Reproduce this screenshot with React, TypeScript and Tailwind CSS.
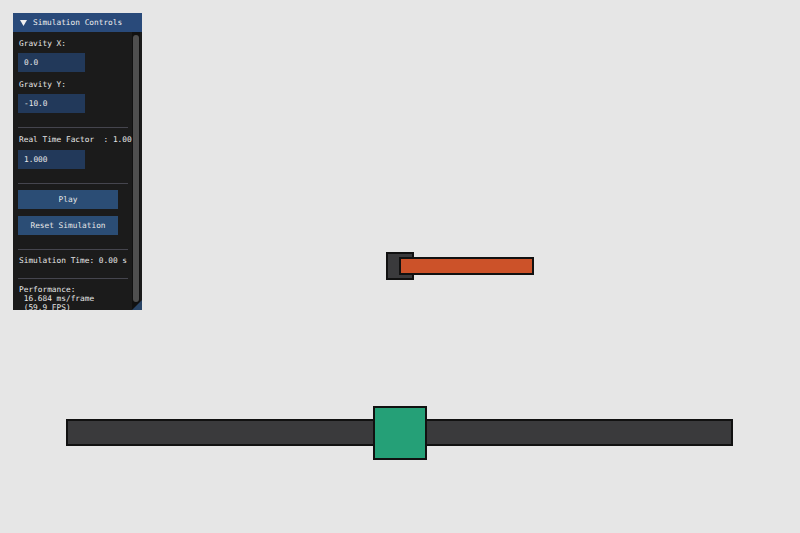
import React from "react";

const mono = { fontFamily: '"DejaVu Sans Mono", "Liberation Mono", monospace' };

function Label({ children, mt }: { children: React.ReactNode; mt: string }) {
  return (
    <div className={`${mt} h-[10px] leading-[10px] pt-px pl-[6px] whitespace-pre text-[7.8px] text-[#e8e8e8]`}>
      {children}
    </div>
  );
}

function Input({ value, mt }: { value: string; mt: string }) {
  return (
    <div className={`${mt} ml-[5px] w-[67px] h-[19px] bg-[#22395a] flex items-center pl-[6px] pt-px text-[7.8px] text-[#e8e8e8]`}>
      {value}
    </div>
  );
}

function Sep({ mt }: { mt: string }) {
  return <div className={`${mt} ml-[5px] w-[110px] h-px bg-[#45454e]`} />;
}

function Btn({ label, mt }: { label: string; mt: string }) {
  return (
    <div className={`${mt} ml-[5px] w-[100px] h-[19px] bg-[#2b4d75] flex items-center justify-center pt-px text-[7.8px] text-[#e8e8e8]`}>
      {label}
    </div>
  );
}

export default function App() {
  return (
    <div className="relative w-[800px] h-[533px] bg-[#e6e6e6] overflow-hidden" style={mono}>
      {/* Scene */}
      <div className="absolute left-[66px] top-[419px] w-[667px] h-[27px] bg-[#3a3a3c] border-2 border-[#111]" />
      <div className="absolute left-[373px] top-[406px] w-[54px] h-[54px] bg-[#25a077] border-2 border-[#111]" />
      <div className="absolute left-[386px] top-[252px] w-[28px] h-[28px] bg-[#3a3a3c] border-2 border-[#111]" />
      <div className="absolute left-[399px] top-[257px] w-[135px] h-[18px] bg-[#cc5229] border-2 border-[#111]" />

      {/* ImGui window */}
      <div className="absolute left-[13px] top-[13px] w-[129px] h-[297px] bg-[#1b1b1b] overflow-hidden flex flex-col">
        <div className="h-[19px] shrink-0 bg-[#294a7a] flex items-center pt-px text-[7.8px] text-[#f0f0f0]">
          <svg width="7" height="6" viewBox="0 0 7 6" className="ml-[7px] mr-[6px]">
            <polygon points="0,0 7,0 3.5,6" fill="#f0f0f0" />
          </svg>
          <span>Simulation Controls</span>
        </div>
        <div className="flex flex-col">
          <Label mt="mt-[6px]">Gravity X:</Label>
          <Input mt="mt-[5px]" value="0.0" />
          <Label mt="mt-[7px]">Gravity Y:</Label>
          <Input mt="mt-[5px]" value="-10.0" />
          <Sep mt="mt-[14px]" />
          <Label mt="mt-[6px]">{"Real Time Factor  : 1.000"}</Label>
          <Input mt="mt-[6px]" value="1.000" />
          <Sep mt="mt-[14px]" />
          <Btn mt="mt-[6px]" label="Play" />
          <Btn mt="mt-[7px]" label="Reset Simulation" />
          <Sep mt="mt-[14px]" />
          <Label mt="mt-[5px]">Simulation Time: 0.00 s</Label>
          <Sep mt="mt-[13px]" />
          <div className="mt-[6px] pl-[6px] text-[7.8px] leading-[9px] text-[#e8e8e8] whitespace-pre">
            <div>Performance:</div>
            <div>{" 16.684 ms/frame"}</div>
            <div>{" (59.9 FPS)"}</div>
          </div>
        </div>
        {/* scrollbar */}
        <div className="absolute right-[2px] top-[19px] w-[8px] h-[278px] bg-[#111]">
          <div className="mt-[3px] mx-[1px] h-[267px] rounded-[3px] bg-[#4f4f4f]" />
        </div>
        {/* resize grip */}
        <svg width="10" height="10" viewBox="0 0 10 10" className="absolute right-0 bottom-0">
          <polygon points="10,0 10,10 0,10" fill="#2a4566" />
        </svg>
      </div>
    </div>
  );
}
